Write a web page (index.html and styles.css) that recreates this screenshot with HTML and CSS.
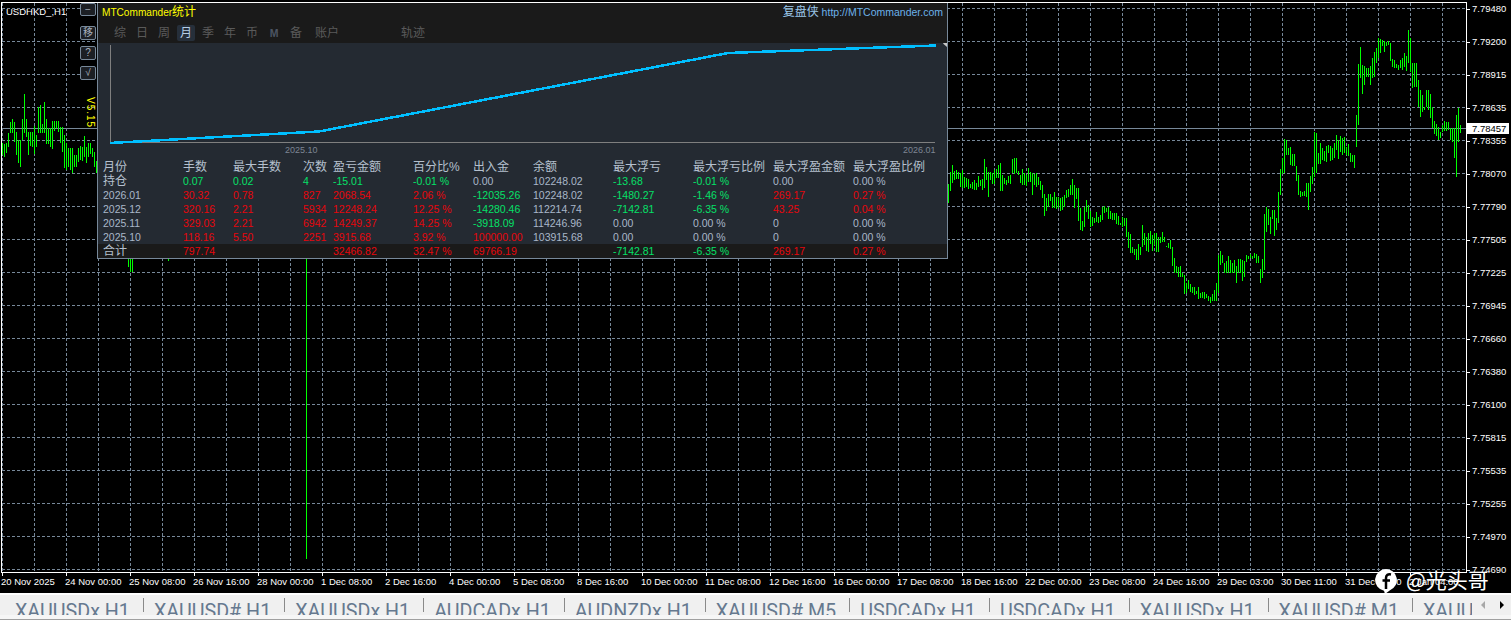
FILE: index.html
```html
<!DOCTYPE html>
<html lang="zh">
<head>
<meta charset="utf-8">
<title>USDHKD H1</title>
<link rel="stylesheet" href="styles.css">
</head>
<body>
<div class="app">
  <div class="chart">
    <div class="chart-main">
      <div class="plot">
        <svg class="plot-svg" width="1464" height="569" viewBox="2 3 1464 569">
          <defs>
            <pattern id="gv" x="34" y="3" width="32" height="5" patternUnits="userSpaceOnUse"><rect width="1" height="3" fill="#778899"/></pattern>
            <pattern id="gh" x="2" y="8" width="5" height="33" patternUnits="userSpaceOnUse"><rect width="3" height="1" fill="#778899"/></pattern>
          </defs>
          <rect x="2" y="3" width="1464" height="569" fill="url(#gv)"/>
          <rect x="2" y="3" width="1464" height="569" fill="url(#gh)"/>
          <rect x="2" y="128" width="1464" height="1" fill="#778899"/>
          <g class="bars">
            <path transform="translate(.5 0) scale(.33333)" d="M6 430V465M12 432V472M18 430V458M24 400V440M30 367V400M36 358V400M42 365V425M48 395V465M54 420V490M60 420V500M66 358V420M72 283V400M78 358V410M84 395V465M90 395V438M96 395V440M102 378V462M108 405V440M114 322V400M120 316V400M126 372V400M132 306V400M138 358V432M144 385V432M150 385V440M156 362V448M162 362V392M168 362V385M174 362V395M180 380V430M186 382V455M192 405V505M198 430V510M204 445V500M210 445V510M216 445V520M222 465V500M228 465V500M234 445V485M240 438V480M246 440V482M252 408V472M258 440V490M264 430V470M270 430V462M276 445V470M282 455V500M288 483V520M384 774V800M390 774V816M396 774V816M504 774V783M918 774V1677"/>
            <path transform="translate(940.5 130) scale(.33333)" d="M24 162V218M30 125V182M36 106V158M42 123V150M48 120V148M54 125V148M60 128V172M66 120V175M72 140V175M78 143V172M84 146V178M90 162V175M96 155V178M102 150V180M108 160V180M114 138V172M120 150V168M126 148V180M132 87V175M138 110V150M144 125V200M150 126V150M156 128V163M162 120V163M168 118V145M174 105V143M180 100V183M186 135V183M192 143V163M198 150V165M204 138V160M210 135V162M216 87V130M222 85V133M228 84V130M234 124V135M240 135V160M246 118V165M252 128V165M258 135V168M264 115V155M270 125V155M276 128V195M282 133V165M288 130V170M294 140V165M300 153V180M306 165V205M312 193V258M318 205V243M324 193V230M330 193V213M336 200V235M342 187V233M348 200V236M354 200V235M360 205V243M366 202V240M372 195V232M378 180V205M384 178V200M390 165V195M396 148V195M402 165V233M408 175V208M414 175V273M420 233V300M426 272V303M432 230V290M438 210V245M444 225V268M450 243V290M456 262V288M462 265V278M468 247V275M474 262V278M480 255V275M486 232V270M492 228V248M498 235V245M504 230V268M510 243V268M516 248V270M522 250V270M528 248V283M534 258V285M540 278V286M546 262V290M552 265V288M558 265V320M564 306V355M570 312V368M576 352V370M582 356V375M588 357V390M594 342V390M600 350V375M606 285V352M612 310V345M618 322V363M624 308V365M630 303V342M636 316V362M642 310V345M648 310V365M654 322V365M660 322V338M666 306V335M672 322V336M678 348V352M684 340V355M690 330V358M696 352V408M702 384V428M708 408V428M714 412V440M720 408V440M726 428V440M732 435V492M738 460V490M744 450V478M750 462V485M756 470V490M762 472V495M768 483V492M774 470V508M780 488V505M786 487V505M792 487V508M798 492V505M804 497V512M810 500V518M816 493V512M822 480V512M828 460V512M834 375V488M840 363V405M846 375V400M852 398V430M858 393V428M864 378V428M870 390V428M876 398V428M882 390V428M888 408V458M894 388V428M900 388V428M906 390V452M912 393V440M918 375V395M924 378V388M930 372V385M936 378V388M942 368V385M948 372V400M954 378V398M960 418V460M966 388V445M972 252V420M978 232V305M984 238V285M990 262V312M996 240V268M1002 240V318M1008 265V300M1014 185V278M1020 118V195M1026 83V132M1032 28V130M1038 30V75M1044 55V75M1050 52V105M1056 72V108M1062 72V108M1068 108V152M1074 135V195M1080 182V200M1086 185V198M1092 182V198M1098 160V200M1104 158V240M1110 138V185M1116 112V162M1122 6V140M1128 10V130M1134 70V103M1140 40V103M1146 55V90M1152 62V92M1158 48V95M1164 45V68M1170 48V92M1176 55V90M1182 38V85M1188 15V60M1194 30V88"/>
            <path transform="translate(1200.5 0) scale(.33333)" d="M420 408V455M426 415V465M432 412V460M438 440V465M444 432V468M450 458V485M456 465V485M462 465V503M468 345V440M474 192V375M480 140V235M486 195V282M492 198V255M498 205V230M504 205V230M510 198V255M516 175V235M522 155V232M528 145V190M534 115V175M540 118V160M546 120V138M552 122V155M558 125V138M564 123V135M570 128V182M576 178V200M582 180V203M588 193V205M594 195V210M600 180V205M606 175V210M612 158V200M618 168V213M624 90V190M630 115V215M636 190V265M642 190V260M648 190V260M654 240V322M660 270V352M666 285V335M672 322V330M678 270V322M684 270V330M690 282V355M696 322V385M702 362V403M708 372V408M714 380V420M720 395V415M726 375V395M732 362V392M738 365V392M744 365V390M750 385V420M756 385V425M762 385V475M768 345V532M774 325V425M780 375V400"/>
          </g>
        </svg>
      </div>
      <div class="price-axis">
        <span class="price">7.79480</span><span class="price">7.79200</span><span class="price">7.78915</span><span class="price">7.78635</span><span class="price">7.78355</span><span class="price">7.78070</span><span class="price">7.77790</span><span class="price">7.77505</span><span class="price">7.77225</span><span class="price">7.76945</span><span class="price">7.76660</span><span class="price">7.76380</span><span class="price">7.76100</span><span class="price">7.75815</span><span class="price">7.75535</span><span class="price">7.75255</span><span class="price">7.74970</span><span class="price">7.74690</span>
      </div>
    </div>
    <div class="time-axis">
      <span class="time">20 Nov 2025</span><span class="time">24 Nov 00:00</span><span class="time">25 Nov 08:00</span><span class="time">26 Nov 16:00</span><span class="time">28 Nov 00:00</span><span class="time">1 Dec 08:00</span><span class="time">2 Dec 16:00</span><span class="time">4 Dec 00:00</span><span class="time">5 Dec 08:00</span><span class="time">8 Dec 16:00</span><span class="time">10 Dec 00:00</span><span class="time">11 Dec 08:00</span><span class="time">12 Dec 16:00</span><span class="time">16 Dec 00:00</span><span class="time">17 Dec 08:00</span><span class="time">18 Dec 16:00</span><span class="time">22 Dec 00:00</span><span class="time">23 Dec 08:00</span><span class="time">24 Dec 16:00</span><span class="time">29 Dec 03:00</span><span class="time">30 Dec 11:00</span><span class="time">31 Dec 19:00</span><span class="time">2 Jan 04:00</span>
    </div>

    <div class="current-price">7.78457</div>
    <div class="symbol">USDHKD_,H1</div>
    <div class="version">V5.15</div>
    <div class="side-buttons">
      <button class="side-btn side-btn-first">&minus;</button>
      <button class="side-btn">移</button>
      <button class="side-btn">?</button>
      <button class="side-btn">√</button>
    </div>

    <section class="panel">
      <header class="panel-head">
        <div class="title-row">
          <span class="title">MTCommander<span class="title-cn">统计</span></span>
          <span class="brand"><span class="brand-cn">复盘侠</span> http://MTCommander.com</span>
        </div>
        <nav class="panel-tabs">
          <span class="ptab">综</span><span class="ptab">日</span><span class="ptab">周</span><span class="ptab ptab-on">月</span><span class="ptab">季</span><span class="ptab">年</span><span class="ptab">币</span><span class="ptab ptab-m">M</span><span class="ptab">备</span><span class="ptab ptab-wide">账户</span><span class="ptab ptab-track">轨迹</span>
        </nav>
      </header>
      <svg class="graph" width="849" height="117" viewBox="98 43 849 117">
        <path class="axis" d="M110.500 45V142.500H935"/>
        <path class="curve" d="M110 143L319 131.500L728 53L936 45.500"/>
        <path class="marker" d="M947 40V47L943 43.500Z"/>
        <text class="graph-date" x="285" y="152.500">2025.10</text>
        <text class="graph-date" x="903" y="152.500">2026.01</text>
      </svg>
      <div class="stats">
        <div class="row row-head"><span>月份</span><span>手数</span><span>最大手数</span><span>次数</span><span>盈亏金额</span><span>百分比%</span><span>出入金</span><span>余额</span><span>最大浮亏</span><span>最大浮亏比例</span><span>最大浮盈金额</span><span>最大浮盈比例</span></div>
        <div class="row"><span class="cjk">持仓</span><span class="g">0.07</span><span class="g">0.02</span><span class="g">4</span><span class="g">-15.01</span><span class="g">-0.01 %</span><span>0.00</span><span>102248.02</span><span class="g">-13.68</span><span class="g">-0.01 %</span><span>0.00</span><span>0.00 %</span></div>
        <div class="row"><span>2026.01</span><span class="r">30.32</span><span class="r">0.78</span><span class="r">827</span><span class="r">2068.54</span><span class="r">2.06 %</span><span class="g">-12035.26</span><span>102248.02</span><span class="g">-1480.27</span><span class="g">-1.46 %</span><span class="r">269.17</span><span class="r">0.27 %</span></div>
        <div class="row"><span>2025.12</span><span class="r">320.16</span><span class="r">2.21</span><span class="r">5934</span><span class="r">12248.24</span><span class="r">12.25 %</span><span class="g">-14280.46</span><span>112214.74</span><span class="g">-7142.81</span><span class="g">-6.35 %</span><span class="r">43.25</span><span class="r">0.04 %</span></div>
        <div class="row"><span>2025.11</span><span class="r">329.03</span><span class="r">2.21</span><span class="r">6942</span><span class="r">14249.37</span><span class="r">14.25 %</span><span class="g">-3918.09</span><span>114246.96</span><span>0.00</span><span>0.00 %</span><span>0</span><span>0.00 %</span></div>
        <div class="row"><span>2025.10</span><span class="r">118.16</span><span class="r">5.50</span><span class="r">2251</span><span class="r">3915.68</span><span class="r">3.92 %</span><span class="r">100000.00</span><span>103915.68</span><span>0.00</span><span>0.00 %</span><span>0</span><span>0.00 %</span></div>
        <div class="row row-total"><span class="cjk">合计</span><span class="r">797.74</span><span></span><span></span><span class="r">32466.82</span><span class="r">32.47 %</span><span class="r">69766.19</span><span></span><span class="g">-7142.81</span><span class="g">-6.35 %</span><span class="r">269.17</span><span class="r">0.27 %</span></div>
      </div>
    </section>
  </div>

  <div class="tabbar">
    <span class="tab tab-first">XAUUSDx H1</span><span class="tab">XAUUSD# H1</span><span class="tab">XAUUSDx H1</span><span class="tab">AUDCADx H1</span><span class="tab">AUDNZDx H1</span><span class="tab">XAUUSD# M5</span><span class="tab">USDCADx H1</span><span class="tab">USDCADx H1</span><span class="tab">XAUUSDx H1</span><span class="tab">XAUUSD# M1</span><span class="tab tab-last">XAUUSDx H1</span>
    <div class="tab-arrows"><span class="arrow arrow-off"></span><span class="arrow arrow-on"></span></div>
  </div>
  <div class="tabbar-foot"></div>

  <div class="watermark">
    <svg class="wm-logo" width="22" height="25" viewBox="0 0 22 25">
      <path d="M11 0a11 11 0 0 1 4 21.200L10 25l-1-3.200A11 11 0 0 1 11 0Z" fill="#fff"/>
      <path d="M16 5.500c-3-.6-5 .5-5 3.500v11M7.500 11.500H15" fill="none" stroke="#000" stroke-width="2.500"/>
    </svg>
    <span class="wm-text">@光头哥</span>
  </div>
</div>
</body>
</html>
```
FILE: styles.css
```css
* { box-sizing: border-box; }
html, body { margin: 0; padding: 0; }
body {
  background: #000;
  font-family: "Liberation Sans", "Noto Sans CJK SC", sans-serif;
  overflow: hidden;
}
.app {
  position: relative;
  width: 1511px;
  height: 620px;
  display: flex;
  flex-direction: column;
  overflow: hidden;
}
.chart {
  position: relative;
  flex: 0 0 593px;
  overflow: hidden;
  background: #000;
  padding-top: 2px;
}
.chart-main { display: flex; height: 571px; }
.plot {
  flex: none;
  width: 1466px;
  height: 571px;
  margin-left: 1px;
  border: 1px solid #fff;
}
.plot-svg { display: block; }
.bars path {
  fill: none;
  stroke: #00ff00;
  stroke-width: 3;
  shape-rendering: crispEdges;
}
.price-axis {
  display: flex;
  flex-direction: column;
  margin-top: -9.500px;
}
.price {
  flex: 0 0 33px;
  display: flex;
  align-items: center;
  font-size: 9.500px;
  line-height: 12px;
  color: #fff;
}
.price::before {
  content: "";
  width: 3px;
  height: 1px;
  margin-right: 2px;
  background: #fff;
}
.time-axis {
  display: flex;
  padding-left: 1px;
  white-space: nowrap;
}
.time {
  flex: 0 0 64px;
  font-size: 9.500px;
  line-height: 12px;
  color: #fff;
}
.time::before {
  content: "";
  display: block;
  width: 1px;
  height: 3px;
  margin-left: 1px;
  background: #fff;
}
.current-price {
  position: absolute;
  left: 1467px;
  top: 123px;
  width: 42px;
  height: 11px;
  padding-left: 5px;
  background: #fff;
  color: #000;
  font-size: 9.500px;
  line-height: 11px;
}
.symbol {
  position: absolute;
  left: 6px;
  top: 6px;
  color: #fff;
  font-size: 9.500px;
  line-height: 12px;
}
.version {
  position: absolute;
  left: 84px;
  top: 97px;
  writing-mode: vertical-rl;
  color: #ffff00;
  font-size: 10px;
  line-height: 12px;
  letter-spacing: 1px;
}
.side-buttons {
  position: absolute;
  left: 80px;
  top: 3px;
  display: flex;
  flex-direction: column;
  gap: 6px;
}
.side-btn {
  width: 16px;
  height: 14px;
  margin: 0;
  padding: 0;
  border: 1px solid #778899;
  border-radius: 2px;
  background: #1c1f24;
  color: #a8b0bc;
  font: 10px/12px "Liberation Sans", "Noto Sans CJK SC", sans-serif;
  text-align: center;
}
.side-btn-first { margin-bottom: 4px; height: 13px; }

.panel {
  position: absolute;
  left: 97px;
  top: 3px;
  width: 851px;
  height: 256px;
  border: 1px solid #778899;
  border-top: 0;
  background: #242a32;
  display: flex;
  flex-direction: column;
}
.panel-head {
  flex: 0 0 40px;
  background: #1a1a1a;
  display: flex;
  flex-direction: column;
}
.title-row {
  display: flex;
  justify-content: space-between;
  align-items: center;
  height: 18px;
  padding: 0 4px;
}
.title { color: #ffff00; font-size: 10.100px; line-height: 18px; }
.title-cn { font-size: 12px; }
.brand { color: #6cb2ea; font-size: 10.500px; line-height: 18px; }
.brand-cn { color: #9cc8ea; font-size: 12px; }
.panel-tabs {
  display: flex;
  gap: 4px;
  padding: 4px 0 0 13px;
}
.ptab {
  flex: none;
  min-width: 18px;
  height: 16px;
  border-radius: 2px;
  color: #5a5a5a;
  font-size: 12px;
  line-height: 16px;
  text-align: center;
}
.ptab-on { background: #262f3a; color: #b5cde6; }
.ptab-m { font-size: 10.500px; font-weight: bold; color: #4c5563; }
.ptab-wide { margin-left: 6px; }
.ptab-track { margin-left: 58px; }

.graph { display: block; flex: none; }
.axis { fill: none; stroke: #7f7f7f; stroke-width: 1; }
.curve { fill: none; stroke: #00bfff; stroke-width: 2.500; shape-rendering: crispEdges; }
.marker { fill: #c8c8c8; }
.graph-date { fill: #7d8592; font-size: 9px; font-family: "Liberation Sans", sans-serif; }

.stats { display: flex; flex-direction: column; }
.row {
  display: grid;
  grid-template-columns: 80px 50px 70px 30px 80px 60px 60px 80px 80px 80px 80px 1fr;
  height: 14px;
  padding-left: 5px;
  color: #a9b7c9;
  font-size: 10.500px;
  line-height: 14px;
  white-space: nowrap;
}
.row-head, .cjk { font-size: 12px; }
.row-head span { color: #b5c0ce; }
.cjk { color: #b5c0ce; }
.row-total { background: #1a1a1a; }
.r { color: #e6060c; }
.g { color: #05e068; }

.tabbar {
  position: relative;
  flex: 0 0 22px;
  display: flex;
  align-items: flex-start;
  height: 22px;
  border-top: 2px solid #fff;
  background: #f0f0f0;
  overflow: hidden;
  white-space: nowrap;
  font-family: Roboto, sans-serif;
}
.tab {
  position: relative;
  flex: none;
  height: 28px;
  margin-top: 3px;
  padding: 0 14px 0 10px;
  color: #66798f;
  font-size: 19.700px;
  line-height: 28px;
}
.tab::after {
  content: "";
  position: absolute;
  right: 0;
  top: 0;
  width: 1px;
  height: 14px;
  background: #8a8a8a;
}
.tab-first { padding-left: 15px; }
.tab-last::after { display: none; }
.tab-arrows {
  position: absolute;
  right: 0;
  top: 0;
  width: 39px;
  height: 20px;
  display: flex;
  align-items: center;
  justify-content: space-between;
  padding: 0 7px 0 9px;
  background: #f0f0f0;
}
.arrow { width: 0; height: 0; border-top: 4px solid transparent; border-bottom: 4px solid transparent; }
.arrow-off { border-right: 4px solid #a8a8a8; }
.arrow-on { border-left: 4px solid #000; }
.tabbar-foot {
  flex: 1;
  background: #f6f6f6;
  border-bottom: 1px solid #a0a0a0;
}

.watermark {
  position: absolute;
  left: 1375px;
  top: 569px;
  display: flex;
  align-items: flex-start;
  gap: 9px;
}
.wm-logo { display: block; flex: none; }
.wm-text {
  color: #fff;
  font-size: 21px;
  line-height: 20px;
  font-family: "Noto Sans CJK SC", sans-serif;
  font-weight: 400;
}
```
